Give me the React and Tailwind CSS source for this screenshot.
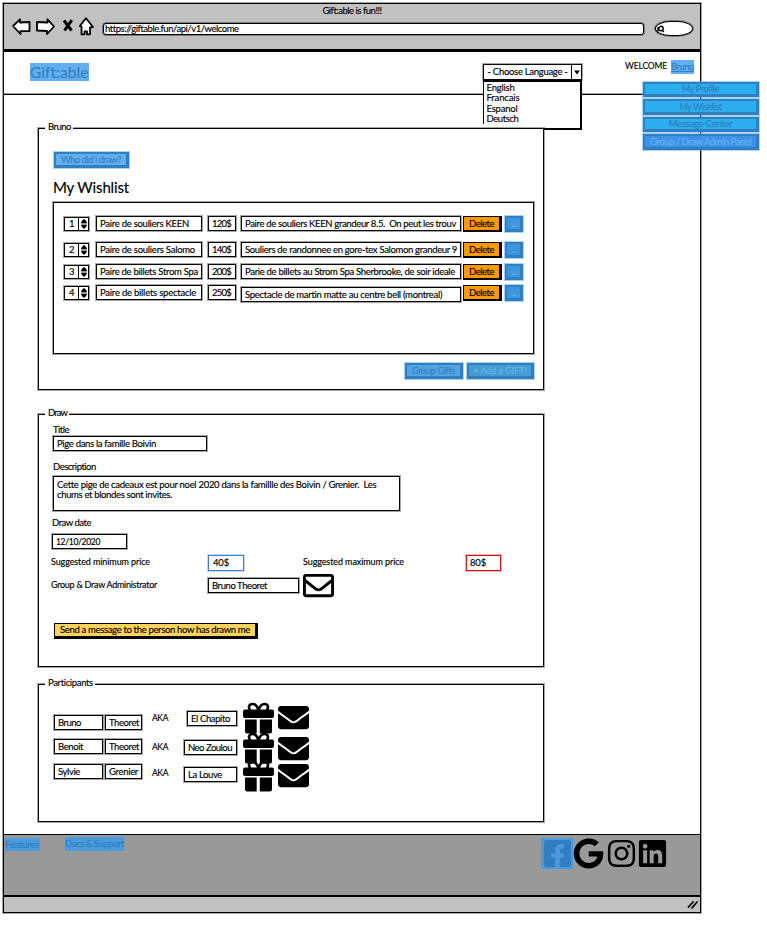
import React, { useLayoutEffect, useRef, useState } from "react";
import {
  FaFacebookSquare,
  FaGoogle,
  FaInstagram,
  FaLinkedin,
  FaEnvelope,
  FaRegEnvelope,
} from "react-icons/fa";

// Single-line label whose tracking is adjusted so it fills a known width.
function T({ w, className = "text-[9.5px] leading-[10px]", children }) {
  const ref = useRef(null);
  const [tracking, setTracking] = useState(0);
  useLayoutEffect(() => {
    const el = ref.current;
    el.style.letterSpacing = "0px";
    const natural = el.getBoundingClientRect().width;
    const next = (w - natural) / el.textContent.length;
    el.style.letterSpacing = next + "px";
    setTracking(next);
  }, [w, children]);
  return (
    <span
      ref={ref}
      className={"inline-block shrink-0 whitespace-pre [-webkit-text-stroke:0.15px_currentColor] " + className}
      style={{ letterSpacing: tracking }}
    >
      {children}
    </span>
  );
}

const small = "text-[8.5px] leading-[10px]";
const ink = "border border-black shadow-[0_0_0_1px_rgba(0,0,0,0.35)]";

function Box({ className, w, textClass, children }) {
  return (
    <div className={`flex shrink-0 bg-white pl-[3px] pt-[2px] ${ink} ${className}`}>
      <T w={w} className={textClass}>{children}</T>
    </div>
  );
}

function LinkButton({ className, w, textClass, children }) {
  return (
    <button
      className={`flex shrink-0 items-center justify-center border-2 border-b-[3px] border-r-[3px] border-[#327fc0] shadow-[0_0_0_1px_rgba(99,174,238,0.55)] ${className}`}
    >
      <T w={w} className={textClass}>{children}</T>
    </button>
  );
}

function Panel({ title, w, className, children }) {
  return (
    <section className={`ml-[34px] flex w-[506px] shrink-0 flex-col items-start ${ink} ${className}`}>
      <h2 className="-mt-[7px] ml-[6px] flex h-[10px] shrink-0 bg-white pl-[3px] pr-[2px]">
        <T w={w}>{title}</T>
      </h2>
      {children}
    </section>
  );
}

function Gift({ className }) {
  return (
    <svg width="31" height="32" viewBox="0 0 31 32" className={"shrink-0 " + className}>
      <path d="M15.500 8C14 3.500 11.500 1.700 9 2C5.500 2.400 5.200 6.500 7.500 8M15.500 8C17 3.500 19.500 1.700 22 2C25.500 2.400 25.800 6.500 23.500 8" fill="none" stroke="black" strokeWidth="2.6" />
      <rect x="0" y="7.500" width="31" height="8.500" rx="2" />
      <path d="M2 17.500H13.700V31.500H4Q2 31.500 2 29.500ZM16.800 17.500H29V29.500Q29 31.500 27 31.500H16.800Z" />
    </svg>
  );
}

const wishes = [
  { n: "1", name: "Paire de souliers KEEN", nw: 89, price: "120$", desc: "Paire de souliers KEEN grandeur 8.5.  On peut les trouv", dw: 211, row: "mt-[13px]", shift: "" },
  { n: "2", name: "Paire de souliers Salomo", nw: 95, price: "140$", desc: "Souliers de randonnee en gore-tex Salomon grandeur 9", dw: 212, row: "mt-[10px]", shift: "" },
  { n: "3", name: "Paire de billets Strom Spa", nw: 98, price: "200$", desc: "Parie de billets au Strom Spa Sherbrooke, de soir ideale", dw: 210, row: "mt-[6px]", shift: "" },
  { n: "4", name: "Paire de billets spectacle", nw: 96, price: "250$", desc: "Spectacle de martin matte au centre bell (montreal)", dw: 197, row: "mt-[5px]", shift: "mt-[2px]" },
];

function WishRow({ wish }) {
  return (
    <div className={`flex h-[16px] shrink-0 pl-[10px] ${wish.row}`}>
      <div className={`mt-[1px] flex h-[14px] w-[25px] bg-white ${ink}`}>
        <div className="flex w-[14px] items-center justify-center border-r border-black">
          <T w={5}>{wish.n}</T>
        </div>
        <svg className="m-auto" width="6" height="10" viewBox="0 0 6 10">
          <path d="M0 4.200C.5 2 2 .3 3 .3S5.500 2 6 4.200ZM0 5.800C.5 8 2 9.700 3 9.700S5.500 8 6 5.800Z" />
          <path d="M0 5H6" stroke="#777" strokeWidth="1" />
        </svg>
      </div>
      <Box w={wish.nw} className="ml-[7px] h-[15px] w-[106px]">{wish.name}</Box>
      <Box w={19} className="ml-[6px] h-[15px] w-[28px]">{wish.price}</Box>
      <Box w={wish.dw} className={`ml-[5px] h-[15px] w-[220px] ${wish.shift}`}>{wish.desc}</Box>
      <button className="ml-[2px] flex h-[16px] w-[39px] items-center justify-center border border-b-2 border-r-[3px] border-black bg-[#ff9900]">
        <T w={25}>Delete</T>
      </button>
      <LinkButton w={5} className="ml-[3px] h-[16px] w-[18px] bg-[#3d96de] text-[#63b4f0]">...</LinkButton>
    </div>
  );
}

const people = [
  { first: "Bruno", fw: 23, last: "Theoret", lw: 30, alias: "El Chapito", aw: 39, row: "mt-[14px]", box: "mt-[13px]", aka: "mt-[11px]", aliasBox: "mt-[9px] ml-[19px] w-[50px]", mail: "mt-[0px]" },
  { first: "Benoit", fw: 25, last: "Theoret", lw: 30, alias: "Neo Zoulou", aw: 44, row: "", box: "mt-[7px]", aka: "mt-[10px]", aliasBox: "mt-[8px] ml-[16px] w-[53px]", mail: "mt-[1px]" },
  { first: "Sylvie", fw: 22, last: "Grenier", lw: 29, alias: "La Louve", aw: 34, row: "-mt-[2px]", box: "mt-[4px]", aka: "mt-[8px]", aliasBox: "mt-[7px] ml-[16px] w-[53px]", mail: "mt-[0px]" },
];

function Person({ p }) {
  return (
    <div className={`ml-[15px] flex h-[30px] shrink-0 items-start ${p.row}`}>
      <Box w={p.fw} className={`h-[15px] w-[49px] ${p.box}`}>{p.first}</Box>
      <Box w={p.lw} className={`ml-[2px] h-[15px] w-[37px] pl-[2px] ${p.box}`}>{p.last}</Box>
      <div className={`ml-[10px] flex w-[16px] ${p.aka}`}><T w={16} className={small}>AKA</T></div>
      <Box w={p.aw} className={`h-[15px] ${p.aliasBox}`}>{p.alias}</Box>
      <Gift className="ml-[6px]" />
      <FaEnvelope className={`ml-[4px] h-[31px] w-[31px] shrink-0 ${p.mail}`} />
    </div>
  );
}

function Chrome() {
  return (
    <header className="flex h-[48px] shrink-0 flex-col border-b-[3px] border-black bg-[#c1c1c1]">
      <div className="flex h-[13px] justify-center pt-[2px]">
        <T w={59}>Gift:able is fun!!!</T>
      </div>
      <div className="flex h-[20px] items-start pl-[7px]">
        <svg width="84" height="20" viewBox="11 16.500 84 20" fill="white" stroke="black" strokeWidth="1.8" strokeLinejoin="round" className="shrink-0">
          <path d="M13 25.500L20 18.800V22L29.500 21.500V30.500L20.500 30.700V33.500Z" />
          <path d="M54 26L47.500 18.800V22L37 21.500V30L47 30.500V33.500Z" />
          <path d="M86 17.800L79.800 25.500L81.500 26V33.800H84.500V31H87V33.800H90V27L93 26.500Z" />
          <path d="M64 20L71.500 30M71.800 19.600L64.500 30" fill="none" strokeWidth="3" />
        </svg>
        <div className={`ml-[8px] mt-[6px] flex h-[12px] w-[541px] items-center rounded-[3px] bg-white pl-[1px] ${ink}`}>
          <T w={133}>https://giftable.fun/api/v1/welcome</T>
        </div>
        <div className={`ml-[11px] mt-[4px] flex h-[15px] w-[38px] items-center rounded-[50%/60%] bg-white pl-[1px] ${ink}`}>
          <svg width="8" height="8" viewBox="0 0 8 8" fill="none" stroke="black" strokeWidth="1.4">
            <circle cx="4" cy="3.500" r="2.200" />
            <path d="M1 2V6.500M5 5L7 7" />
          </svg>
        </div>
      </div>
    </header>
  );
}

function Header() {
  return (
    <div className="flex h-[43px] shrink-0 items-start border-b border-black shadow-[0_-1px_0_rgba(0,0,0,0.35)_inset]">
      <div className="ml-[26px] mt-[11px] flex h-[18px] w-[59px] items-center bg-[#63aeee] text-[#327fc0]">
        <T w={58} className="text-[15.5px] leading-[16px]">Gift:able</T>
      </div>
      <div className="relative ml-[394px] mt-[12px] w-[99px]">
        <div className={`flex h-[16px] items-center bg-white ${ink}`}>
          <div className="flex w-[87px] justify-center"><T w={80}>- Choose Language -</T></div>
          <div className="flex h-full flex-1 items-center justify-center border-l border-black">
            <svg width="6" height="5" viewBox="0 0 6 5"><path d="M0 .5H6L3 4.500Z" /></svg>
          </div>
        </div>
        <div className="absolute left-0 top-[16px] z-10 flex h-[51px] w-[99px] flex-col">
          <div className="flex h-[44px] flex-col border-l border-r-2 border-t-2 border-black bg-white pl-[2.5px] pt-[1px]">
            <div className="flex h-[10.400px]"><T w={28}>English</T></div>
            <div className="flex h-[10.400px]"><T w={33}>Francais</T></div>
            <div className="flex h-[10.400px]"><T w={31}>Espanol</T></div>
            <div className="flex h-[10.400px]"><T w={32}>Deutsch</T></div>
          </div>
          <div className="ml-[61px] h-[6px] border-b-2 border-r-2 border-black" />
        </div>
      </div>
      <div className="relative ml-[43px] mt-[8px] flex w-[70px] items-start">
        <div className="mt-[1px] flex w-[46px]"><T w={42} className={small}>WELCOME</T></div>
        <a className="flex h-[14px] w-[23px] items-center bg-[#63aeee] text-[#327fc0] underline"><T w={23}>Bruno</T></a>
        <nav className="absolute left-[18px] top-[22px] z-20 flex w-[116px] flex-col gap-[2px]">
          <LinkButton w={37} textClass="text-[9px] leading-[10px]" className="h-[15px] bg-[#2cadee] text-[#327fc0]">My Profile</LinkButton>
          <LinkButton w={42} textClass="text-[9px] leading-[10px]" className="h-[16px] bg-[#2cadee] text-[#327fc0]">My Wishlist</LinkButton>
          <LinkButton w={64} className="h-[15px] bg-[#2cadee] text-[#327fc0]">Message Center</LinkButton>
          <LinkButton w={101} className="h-[16px] bg-[#3d91e8] text-[#63b4f0]">Group / Draw Admin Panel</LinkButton>
        </nav>
      </div>
    </div>
  );
}

export default function App() {
  return (
    <div className="h-[927px] w-[767px] overflow-hidden bg-white pl-[3px] pt-[3px] text-black" style={{ fontFamily: 'Lato, "Open Sans", sans-serif' }}>
      <div className={`flex h-[910px] w-[698px] flex-col bg-white ${ink}`}>
        <Chrome />
        <Header />
        <main className="flex h-[739px] shrink-0 flex-col">
          <Panel title="Bruno" w={23} className="mt-[33px] h-[262px]">
            <LinkButton w={60} className="ml-[15px] mt-[20px] h-[16px] w-[75px] bg-[#63aeee] text-[#327fc0]">Who did i draw?</LinkButton>
            <div className="ml-[14px] mt-[9px] flex h-[19px] items-center">
              <T w={76} className="text-[15px] leading-[18px] [-webkit-text-stroke:0.3px_black]">My Wishlist</T>
            </div>
            <div className={`ml-[14px] mt-[6px] flex h-[152px] w-[481px] shrink-0 flex-col ${ink}`}>
              {wishes.map((x) => <WishRow key={x.n} wish={x} />)}
            </div>
            <div className="ml-[366px] mt-[9px] flex gap-[4px]">
              <LinkButton w={43} textClass="text-[9px] leading-[10px]" className="h-[16px] w-[58px] bg-[#52a4e0] text-[#327fc0]">Group Gifts</LinkButton>
              <LinkButton w={53} textClass="text-[9px] leading-[10px]" className="h-[16px] w-[67px] bg-[#469cd0] text-[#63b4f0]">+ Add a GIFT!</LinkButton>
            </div>
          </Panel>

          <Panel title="Draw" w={19} className="mt-[24px] h-[253px]">
            <div className="ml-[14px] mt-[7px] flex"><T w={16}>Title</T></div>
            <Box w={99} className="ml-[14px] mt-[1px] h-[15px] w-[154px]">Pige dans la famille Boivin</Box>
            <div className="ml-[14px] mt-[11px] flex"><T w={43}>Description</T></div>
            <div className={`ml-[14px] mt-[4px] flex h-[35px] w-[347px] shrink-0 flex-col items-start pl-[3px] pt-[3px] ${ink}`}>
              <T w={319}>Cette pige de cadeaux est pour noel 2020 dans la famillle des Boivin / Grenier.  Les</T>
              <T w={115}>chums et blondes sont invites.</T>
            </div>
            <div className="ml-[13px] mt-[7px] flex"><T w={39}>Draw date</T></div>
            <Box w={44} textClass={small} className="ml-[13px] mt-[6px] h-[15px] w-[75px]">12/10/2020</Box>
            <div className="ml-[12px] mt-[6px] flex h-[16px] shrink-0 items-start">
              <div className="mt-[2px] flex w-[157px]"><T w={99} className="text-[9px] leading-[10px]">Suggested minimum price</T></div>
              <div className="flex h-[16px] w-[36px] border-[1.5px] border-[#3a7fe0] pl-[4px] pt-[2px] shadow-[0_0_0_1px_rgba(58,127,224,0.3)]"><T w={16}>40$</T></div>
              <div className="ml-[59px] mt-[2px] flex w-[163px]"><T w={101} className="text-[9px] leading-[10px]">Suggested maximum price</T></div>
              <div className="flex h-[16px] w-[35px] border-[1.5px] border-[#d01010] pl-[3px] pt-[2px] shadow-[0_0_0_1px_rgba(208,16,16,0.3)]"><T w={16}>80$</T></div>
            </div>
            <div className="ml-[12px] flex h-[30px] shrink-0 items-start">
              <div className="mt-[9px] flex w-[157px]"><T w={106} className="text-[9px] leading-[10px]">Group &amp; Draw Administrator</T></div>
              <Box w={55} className="mt-[7px] h-[15px] w-[91px]">Bruno Theoret</Box>
              <FaRegEnvelope className="-mt-[1px] ml-[4px] h-[31px] w-[31px]" />
            </div>
            <button className="ml-[15px] mt-[22px] flex h-[16px] w-[204px] shrink-0 items-center border border-b-[3px] border-r-[3px] border-black bg-[#ffd45e] pl-[5px]">
              <T w={190}>Send a message to the person how has drawn me</T>
            </button>
          </Panel>

          <Panel title="Participants" w={45} className="mt-[17px] h-[138px]">
            {people.map((p) => <Person key={p.first} p={p} />)}
          </Panel>
        </main>
        <footer className="flex h-[63px] shrink-0 items-start border-b-2 border-t border-black bg-[#999999]">
          <a className="ml-[1px] mt-[3px] flex h-[13px] w-[35px] items-center bg-[#4a9ade] text-[#327fc0]"><T w={34}>Features</T></a>
          <a className="ml-[25px] mt-[2px] flex h-[14px] w-[59px] items-center bg-[#4a9ade] text-[#327fc0]"><T w={59} className="text-[9px] leading-[10px]">Docs &amp; Support</T></a>
          <div className="ml-[417px] mt-[3px] flex h-[31px]">
            <div className="flex h-[31px] w-[32px] items-center justify-center bg-[#4a9ade] text-[#327fc0]"><FaFacebookSquare size={31} /></div>
            <FaGoogle size={31} />
            <FaInstagram size={31} className="ml-[2px]" />
            <FaLinkedin size={31} />
          </div>
        </footer>
        <div className="flex flex-1 items-center justify-end bg-[#c1c1c1] pr-[2px]">
          <svg width="11" height="9" viewBox="0 0 11 9" stroke="black" strokeWidth="1.8" strokeLinecap="round">
            <path d="M1.500 7L6 2M5 8L10 2" />
          </svg>
        </div>
      </div>
    </div>
  );
}
